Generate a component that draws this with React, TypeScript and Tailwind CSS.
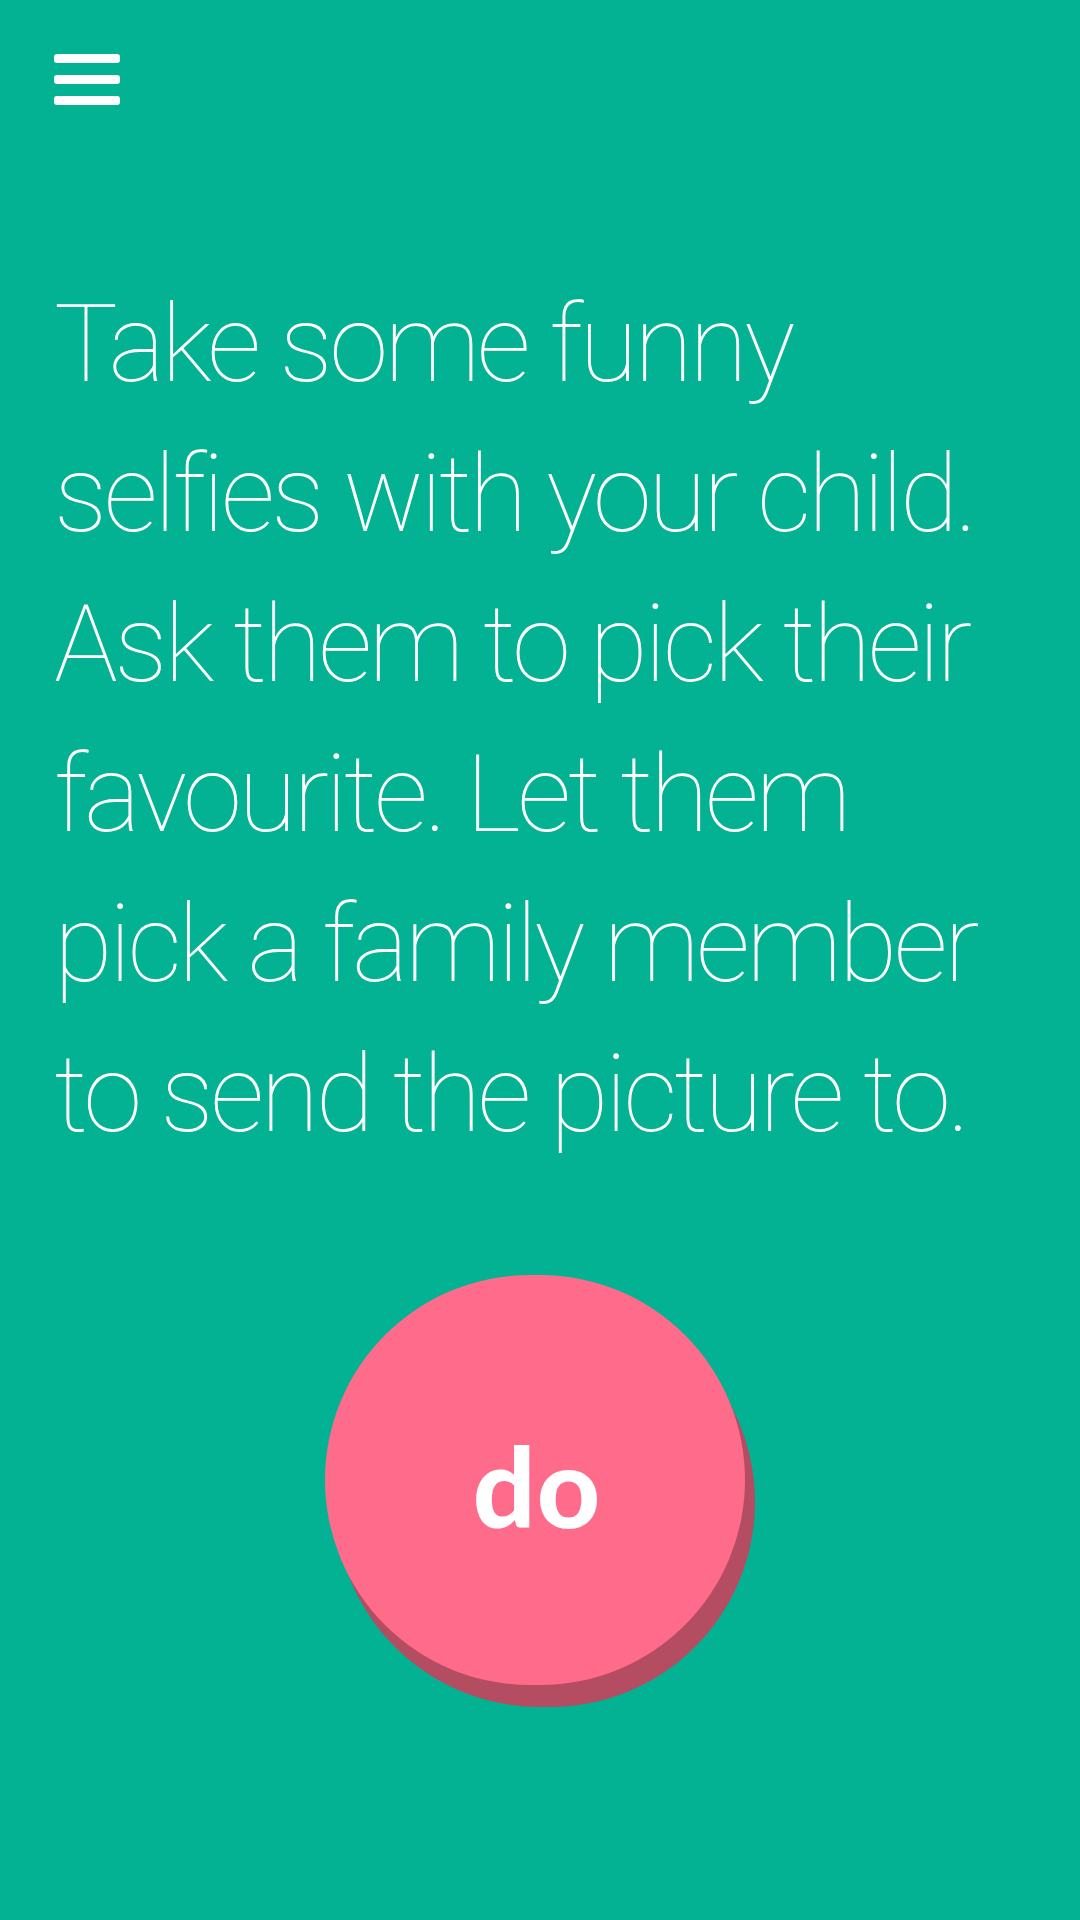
const lines = [
  'Take some funny',
  'selfies with your child.',
  'Ask them to pick their',
  'favourite. Let them',
  'pick a family member',
  'to send the picture to.',
]

function Hamburger() {
  return (
    <button className="flex flex-col gap-[12px] w-[66px]" aria-label="menu">
      <span className="block h-[9px] w-full rounded-[3px] bg-white" />
      <span className="block h-[9px] w-full rounded-[3px] bg-white" />
      <span className="block h-[9px] w-full rounded-[3px] bg-white" />
    </button>
  )
}

export default function App() {
  return (
    <div className="w-[1080px] h-[1920px] bg-[#03b193] overflow-hidden flex flex-col px-[54px] pt-[54px]">
      <Hamburger />

      {/* prompt text */}
      <p
        className="mt-[165px] text-white text-[107px] leading-[150px] font-thin tracking-[-3.6px]"
        style={{ fontFamily: 'Roboto, "Noto Sans", sans-serif' }}
      >
        {lines.map((line, i) => (
          <span key={i} className="block whitespace-nowrap">
            {line}
          </span>
        ))}
      </p>

      {/* big do button */}
      <div className="flex justify-center mt-[105px] pr-[10px]">
        <button className="w-[420px] h-[410px] rounded-full bg-[#ff6b8a] shadow-[10px_22px_0_#b54d62] flex items-center justify-center">
          <span
            className="text-white text-[110px] font-black leading-none tracking-[1px] pt-[10px] pl-[4px]"
            style={{ fontFamily: 'Lato, "Open Sans", sans-serif' }}
          >
            do
          </span>
        </button>
      </div>
    </div>
  )
}
